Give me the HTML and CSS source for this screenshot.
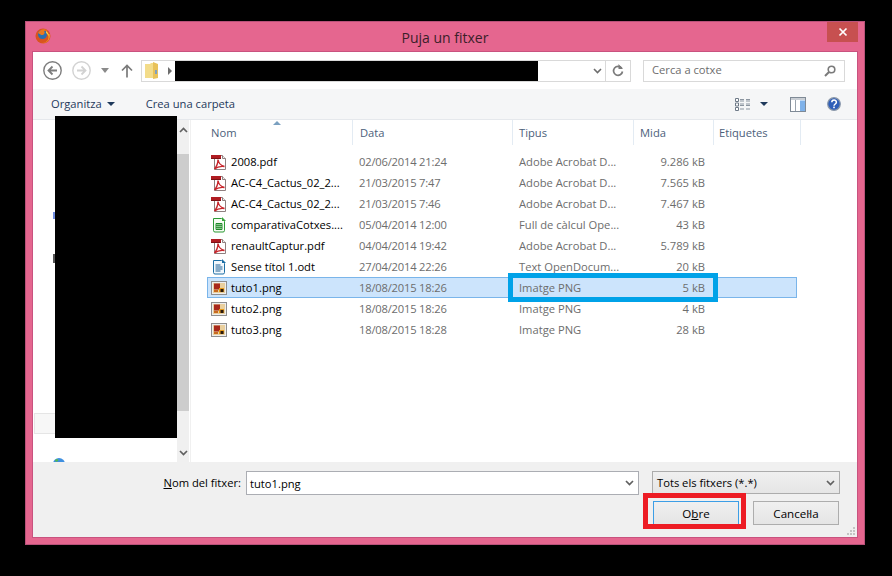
FILE: index.html
```html
<!DOCTYPE html>
<html lang="ca">
<head>
    <meta charset="UTF-8">
    <title>Puja un fitxer</title>
    <link rel="stylesheet" href="styles.css">
</head>
<body>
<svg class="sprites" width="0" height="0">
    <symbol id="i-pdf" viewBox="0 0 16 16">
        <path d="M3.500 1.500h8l3 3v11h-11z" fill="#fff" stroke="#8f7f7f"/>
        <path d="M11.500 1.500v3h3" fill="#eee" stroke="#8f7f7f"/>
        <rect x="0" y="1" width="10" height="4" fill="#b01c22"/>
        <rect x="0" y="4" width="10" height="1" fill="#7c1216"/>
        <path d="M7 5.500c.5 3.500 2.500 6 6.500 7-3.500-.5-7 0-10 2.500 2.500-3 3.500-6 3.500-9.500z" fill="none" stroke="#c8262c" stroke-width="1.400"/>
    </symbol>
    <symbol id="i-ods" viewBox="0 0 16 16">
        <path d="M2.500 1.500h8l3 3v9a1.500 1.500 0 0 1-1.500 1.500h-8a1.500 1.500 0 0 1-1.500-1.500z" fill="#f6fcf3" stroke="#2c9a35"/>
        <path d="M11 0l4 4h-4z" fill="#3aa63c"/>
        <path d="M5 6.500h6v6h-6z" fill="#d5efcf" stroke="#1f8a2b"/>
        <path d="M5 8.500h6M5 10.500h6M7 6.500v6M9 6.500v6" stroke="#1f8a2b" stroke-width=".8"/>
    </symbol>
    <symbol id="i-odt" viewBox="0 0 16 16">
        <path d="M2.500 1.500h8l3 3v9a1.500 1.500 0 0 1-1.500 1.500h-8a1.500 1.500 0 0 1-1.500-1.500z" fill="#f2f8fd" stroke="#1c6ea4"/>
        <path d="M11 0l4 4h-4z" fill="#1c6ea4"/>
        <path d="M4.500 6h5M4.500 8h7M4.500 10h7M4.500 12h5" stroke="#1c5f94" stroke-width="1.100"/>
    </symbol>
    <symbol id="i-png" viewBox="0 0 16 16">
        <rect x=".5" y="1.500" width="15" height="13" fill="#eee" stroke="#8e8e8e"/>
        <rect x="2" y="3" width="12" height="10" fill="#e9cf9e"/>
        <rect x="3" y="3.500" width="6" height="6" fill="#a8281c"/>
        <rect x="8" y="8" width="5" height="4" fill="#e89a18"/>
        <rect x="9.500" y="9" width="3" height="3" fill="#2a1a10"/>
        <rect x="3" y="10" width="4" height="2" fill="#c86a20"/>
    </symbol>
</svg>

<div class="window">
    <div class="titlebar">
        <svg class="fox" width="16" height="16" viewBox="0 0 16 16">
            <circle cx="8" cy="8" r="7.500" fill="#d9541e"/>
            <path d="M14.500 6a7 7 0 0 1-8 9c4 0 7-2 7-6 0-1-.2-2-.6-3z" fill="#f3a326"/>
            <circle cx="7.500" cy="6.500" r="4.500" fill="#2a6fb0"/>
            <path d="M3 5c2-4 7-5 10-2-2-1-3-.5-4 0 1 1 1 3-1 4-2 .5-3-1-5-2z" fill="#e8791e"/>
            <path d="M11 3c2 1 3 3 2.500 5.500-.5-2-1.500-3-2.500-3.500z" fill="#f8d048"/>
        </svg>
        <div class="title">Puja un fitxer</div>
        <div class="close">
            <svg width="10" height="10" viewBox="0 0 10 10"><path d="M1.500 1.500l7 7M8.500 1.500l-7 7" stroke="#fff" stroke-width="1.700"/></svg>
        </div>
    </div>

    <div class="dialog">
        <div class="navbar">
            <svg class="nav-back" width="19" height="19" viewBox="0 0 19 19">
                <circle cx="9.500" cy="9.500" r="8.700" fill="#fff" stroke="#7d7d7d" stroke-width="1.400"/>
                <path d="M14 9.500h-8M9.500 5.500l-4 4 4 4" fill="none" stroke="#7d7d7d" stroke-width="1.800"/>
            </svg>
            <svg class="nav-fwd" width="19" height="19" viewBox="0 0 19 19">
                <circle cx="9.500" cy="9.500" r="8.700" fill="#fff" stroke="#d2d2d2" stroke-width="1.400"/>
                <path d="M5 9.500h8M9.500 5.500l4 4-4 4" fill="none" stroke="#d2d2d2" stroke-width="1.800"/>
            </svg>
            <span class="nav-drop"></span>
            <svg class="nav-up" width="14" height="14" viewBox="0 0 14 14">
                <path d="M7 13.500v-12M2 6.500l5-5 5 5" fill="none" stroke="#7a7a7a" stroke-width="1.700"/>
            </svg>
            <div class="address">
                <svg class="folder" width="14" height="17" viewBox="0 0 14 17">
                    <path d="M0 2h5l1-1h2v15h-8z" fill="#f3dc8a"/>
                    <path d="M8 0l5 2v14l-5 1z" fill="#e8c25a"/>
                    <rect x="10" y="8" width="2" height="4" fill="#7f9fc0"/>
                </svg>
                <span class="crumb-arrow"></span>
                <span class="redact-path"></span>
                <svg class="addr-chevron" width="9" height="6" viewBox="0 0 9 6"><path d="M1 1l3.500 3.500 3.500-3.500" fill="none" stroke="#6d6d6d" stroke-width="1.600"/></svg>
                <span class="addr-sep"></span>
                <svg class="addr-refresh" width="12" height="13" viewBox="0 0 12 13">
                    <path d="M9.700 4.200a4.500 4.500 0 1 0 .8 3.300" fill="none" stroke="#7a7a7a" stroke-width="1.700"/>
                    <path d="M6.500 0v5h4.500z" fill="#7a7a7a"/>
                </svg>
            </div>
            <div class="search">
                <span class="search-text">Cerca a cotxe</span>
                <svg width="12" height="12" viewBox="0 0 12 12">
                    <circle cx="7.500" cy="4.500" r="3.300" fill="none" stroke="#7a7a7a" stroke-width="1.600"/>
                    <path d="M5 7l-4 4" stroke="#7a7a7a" stroke-width="2"/>
                </svg>
            </div>
        </div>

        <div class="cmdbar">
            <span class="cmd">Organitza<i class="caret"></i></span>
            <span class="cmd cmd-new">Crea una carpeta</span>
            <span class="cmd-spacer"></span>
            <svg class="view-icon" width="16" height="13" viewBox="0 0 16 13">
                <path d="M.5.500h3v3h-3zM.5 5h3v3h-3zM.5 9.500h3v3h-3z" fill="#fff" stroke="#6f7b88"/>
                <path d="M5 1.500h4M11 1.500h4M5 3h4M11 3h4M5 6h4M11 6h4M5 7.500h4M11 7.500h4M5 11h4M11 11h4" stroke="#8b95a0"/>
            </svg>
            <i class="caret view-caret"></i>
            <svg class="panel-icon" width="16" height="15" viewBox="0 0 16 15">
                <rect x=".5" y=".5" width="15" height="14" fill="#fff" stroke="#7f8a96"/>
                <rect x="1" y="1" width="14" height="2" fill="#c9ced4"/>
                <path d="M5.500 3v11" stroke="#9aa3ad"/>
                <rect x="10" y="3.500" width="5" height="10.500" fill="#7fb2ea"/>
            </svg>
            <svg class="help-icon" width="14" height="14" viewBox="0 0 14 14">
                <circle cx="7" cy="7" r="6.300" fill="#2f5fb8" stroke="#8a97a8" stroke-width="1.200"/>
                <path d="M4.800 5.300c0-3 4.600-3 4.600-.1 0 1.800-2.400 1.800-2.400 3.600" fill="none" stroke="#fff" stroke-width="1.500"/>
                <rect x="6.200" y="9.600" width="1.600" height="1.600" fill="#fff"/>
            </svg>
        </div>

        <div class="browser">
            <div class="sidepane">
                <div class="tree">
                    <div class="tree-blue"></div>
                    <div class="tree-dark"></div>
                    <div class="tree-current"></div>
                    <svg class="tree-globe" width="12" height="12" viewBox="0 0 12 12">
                        <circle cx="6" cy="6" r="6" fill="#3f8fe0"/>
                        <path d="M2 2c2-2 4-1 3 1-1 1-3 1-3-1z" fill="#52b852"/>
                    </svg>
                </div>
                <div class="scrollbar">
                    <svg class="scroll-up" width="9" height="6" viewBox="0 0 9 6"><path d="M1 5l3.500-3.500 3.500 3.500" fill="none" stroke="#606060" stroke-width="1.700"/></svg>
                    <div class="thumb"></div>
                    <svg class="scroll-down" width="9" height="6" viewBox="0 0 9 6"><path d="M1 1l3.500 3.500 3.500-3.500" fill="none" stroke="#606060" stroke-width="1.700"/></svg>
                </div>
                <div class="redact-tree"></div>
            </div>

            <div class="filelist">
                <div class="columns">
                    <div class="col col-name">Nom<span class="sort"></span></div>
                    <div class="col col-date">Data</div>
                    <div class="col col-type">Tipus</div>
                    <div class="col col-size">Mida</div>
                    <div class="col col-tags">Etiquetes</div>
                </div>
                <div class="rows">
                    <div class="row"><div class="name"><svg><use href="#i-pdf"/></svg>2008.pdf</div><div class="date">02/06/2014 21:24</div><div class="type">Adobe Acrobat D...</div><div class="size">9.286 kB</div></div>
                    <div class="row"><div class="name"><svg><use href="#i-pdf"/></svg>AC-C4_Cactus_02_2...</div><div class="date">21/03/2015 7:47</div><div class="type">Adobe Acrobat D...</div><div class="size">7.565 kB</div></div>
                    <div class="row"><div class="name"><svg><use href="#i-pdf"/></svg>AC-C4_Cactus_02_2...</div><div class="date">21/03/2015 7:46</div><div class="type">Adobe Acrobat D...</div><div class="size">7.467 kB</div></div>
                    <div class="row"><div class="name"><svg><use href="#i-ods"/></svg>comparativaCotxes....</div><div class="date">05/04/2014 12:00</div><div class="type">Full de càlcul Ope...</div><div class="size">43 kB</div></div>
                    <div class="row"><div class="name"><svg><use href="#i-pdf"/></svg>renaultCaptur.pdf</div><div class="date">04/04/2014 19:42</div><div class="type">Adobe Acrobat D...</div><div class="size">5.789 kB</div></div>
                    <div class="row"><div class="name"><svg><use href="#i-odt"/></svg>Sense títol 1.odt</div><div class="date">27/04/2014 22:26</div><div class="type">Text OpenDocum...</div><div class="size">20 kB</div></div>
                    <div class="row selected"><div class="name"><svg><use href="#i-png"/></svg>tuto1.png</div><div class="date">18/08/2015 18:26</div><div class="type">Imatge PNG</div><div class="size">5 kB</div></div>
                    <div class="row"><div class="name"><svg><use href="#i-png"/></svg>tuto2.png</div><div class="date">18/08/2015 18:26</div><div class="type">Imatge PNG</div><div class="size">4 kB</div></div>
                    <div class="row"><div class="name"><svg><use href="#i-png"/></svg>tuto3.png</div><div class="date">18/08/2015 18:28</div><div class="type">Imatge PNG</div><div class="size">28 kB</div></div>
                </div>
            </div>
        </div>

        <div class="footer">
            <div class="file-row">
                <label class="file-label"><u>N</u>om del fitxer:</label>
                <div class="file-input">
                    <span>tuto1.png</span>
                    <svg width="9" height="6" viewBox="0 0 9 6"><path d="M1 1l3.500 3.500 3.500-3.500" fill="none" stroke="#606060" stroke-width="1.700"/></svg>
                </div>
                <div class="file-filter">
                    <span>Tots els fitxers (*.*)</span>
                    <svg width="9" height="6" viewBox="0 0 9 6"><path d="M1 1l3.500 3.500 3.500-3.500" fill="none" stroke="#606060" stroke-width="1.700"/></svg>
                </div>
            </div>
            <div class="button-row">
                <button type="button" class="btn btn-default">O<u>b</u>re</button>
                <button type="button" class="btn">Cancel·la</button>
            </div>
            <svg class="grip" width="8" height="8" viewBox="0 0 8 8">
                <path d="M6 0h2v2h-2zM3 3h2v2h-2zM6 3h2v2h-2zM0 6h2v2h-2zM3 6h2v2h-2zM6 6h2v2h-2z" fill="#c4c4c4"/>
            </svg>
        </div>
    </div>

    <div class="mark mark-row"></div>
    <div class="mark mark-button"></div>
</div>
</body>
</html>
```

FILE: styles.css
```css
* {
    box-sizing: border-box;
}
body {
    margin: 0;
    padding: 21px 0 0 25px;
    height: 576px;
    overflow: hidden;
    background-color: #000;
    font-family: "Open Sans", "Liberation Sans", sans-serif;
    font-size: 11.2px;
    color: #000;
}
.sprites {
    position: absolute;
}
.window {
    position: relative;
    width: 840px;
    height: 524px;
    padding: 0 6px 6px;
    background-color: #e5668f;
    border: 1px solid #b9527a;
}

/* title bar */
.titlebar {
    display: grid;
    grid-template-columns: 1fr auto 1fr;
    height: 29px;
}
.fox {
    margin: 6px 0 0 3px;
}
.title {
    padding-top: 6px;
    font-size: 14px;
    line-height: 19px;
    color: #3a2029;
}
.close {
    justify-self: end;
    display: flex;
    align-items: center;
    justify-content: center;
    width: 31px;
    height: 20px;
    background-color: #c75050;
}

.dialog {
    display: flex;
    flex-direction: column;
    height: 487px;
    background-color: #fff;
    border: 1px solid #c9527f;
}

/* navigation */
.navbar {
    display: flex;
    align-items: center;
    height: 37px;
    padding-left: 10px;
}
.nav-fwd {
    margin-left: 10px;
}
.nav-drop {
    margin-left: 10px;
    border-top: 5px solid #8a8a8a;
    border-left: 4px solid transparent;
    border-right: 4px solid transparent;
}
.nav-up {
    margin-left: 11px;
}
.address {
    display: flex;
    align-items: center;
    width: 490px;
    height: 22px;
    margin-left: 7px;
    padding-left: 3px;
    border: 1px solid #d9d9d9;
}
.crumb-arrow {
    margin-left: 9px;
    border-left: 4px solid #6d6d6d;
    border-top: 4px solid transparent;
    border-bottom: 4px solid transparent;
}
.redact-path {
    width: 363px;
    height: 20px;
    margin-left: 3px;
    background-color: #000;
}
.addr-chevron {
    margin-left: 55px;
}
.addr-sep {
    width: 1px;
    height: 20px;
    margin-left: 3px;
    background-color: #d9d9d9;
}
.addr-refresh {
    margin-left: 6px;
}
.search {
    display: flex;
    align-items: center;
    justify-content: space-between;
    width: 202px;
    height: 22px;
    margin-left: 12px;
    padding: 0 8px;
    border: 1px solid #d9d9d9;
    color: #6d6d6d;
}
.search-text {
    margin-top: -2px;
}

/* command bar */
.cmdbar {
    display: flex;
    align-items: center;
    height: 31px;
    padding-left: 18px;
    background-color: #f5f6f7;
    border-bottom: 1px solid #e5e8ec;
    color: #1e395b;
}
.cmd {
    margin-top: -2px;
}
.cmd-new {
    margin-left: 31px;
}
.cmd-spacer {
    flex: 1;
}
.caret {
    display: inline-block;
    margin-left: 5px;
    vertical-align: 2px;
    border-top: 4px solid #1e395b;
    border-left: 4px solid transparent;
    border-right: 4px solid transparent;
}
.view-caret {
    margin-left: 9px;
    vertical-align: baseline;
}
.panel-icon {
    margin-left: 22px;
}
.help-icon {
    margin: 0 16px 0 21px;
}

/* browser area */
.browser {
    display: flex;
    height: 342px;
}
.sidepane {
    position: relative;
    display: flex;
    width: 158px;
    border-right: 1px solid #f0f0f0;
}
.tree {
    flex: none;
    width: 144px;
    padding-top: 92px;
    overflow: hidden;
}
.tree-blue {
    width: 3px;
    height: 7px;
    margin-left: 20px;
    background-color: #6f8ce0;
}
.tree-dark {
    width: 3px;
    height: 9px;
    margin: 35px 0 0 20px;
    background-color: #555;
}
.tree-current {
    width: 60px;
    height: 21px;
    margin: 150px 0 0 1px;
    background-color: #f7f7f7;
    border: 1px solid #e5e5e5;
}
.tree-globe {
    display: block;
    margin: 24px 0 0 20px;
}
.scrollbar {
    display: flex;
    flex-direction: column;
    align-items: center;
    width: 12px;
    height: 342px;
    background-color: #f0f0f0;
}
.scroll-up {
    margin-top: 7px;
    flex: none;
}
.thumb {
    width: 12px;
    height: 257px;
    margin-top: 21px;
    background-color: #cdcdcd;
}
.scroll-down {
    margin-top: 39px;
    flex: none;
}
.redact-tree {
    position: absolute;
    left: 22px;
    top: -4px;
    width: 122px;
    height: 322px;
    background-color: #000;
}

/* file list */
.filelist {
    flex: 1;
    padding-left: 16px;
}
.columns, .row {
    display: grid;
    grid-template-columns: 145px 160px 121px 80px 87px;
}
.columns {
    height: 25px;
    margin: 0 0 6px 1px;
    color: #4c607a;
}
.col {
    position: relative;
    height: 25px;
    padding: 5px 0 0 6px;
    border-right: 1px solid #e3ebf3;
}
.col-name {
    padding-left: 3px;
}
.col-date {
    padding-left: 7px;
}
.col-tags {
    padding-left: 5px;
}
.sort {
    position: absolute;
    left: 65px;
    top: 1px;
    border-bottom: 4px solid #7aa0c0;
    border-left: 4px solid transparent;
    border-right: 4px solid transparent;
}
.row {
    align-items: center;
    width: 590px;
    height: 21px;
    line-height: 19px;
    border: 1px solid transparent;
    color: #6d6d6d;
}
.row.selected {
    background-color: #cce4fc;
    border-color: #7ab5ea;
}
.name {
    display: flex;
    align-items: center;
    color: #000;
}
.name svg {
    flex: none;
    width: 16px;
    height: 16px;
    margin: 0 4px 0 3px;
}
.date {
    padding-left: 6px;
    letter-spacing: -0.2px;
}
.type {
    padding-left: 6px;
    white-space: nowrap;
}
.size {
    padding-right: 9px;
    text-align: right;
}

/* bottom area */
.footer {
    position: relative;
    display: flex;
    flex-direction: column;
    gap: 6px;
    height: 75px;
    padding: 9px 17px 0 0;
    background-color: #f0f0f0;
}
.file-row {
    display: flex;
    align-items: flex-start;
    justify-content: flex-end;
    height: 24px;
}
.file-label {
    margin-right: 5px;
    line-height: 24px;
}
.file-input, .file-filter {
    display: flex;
    align-items: center;
    justify-content: space-between;
    padding: 0 4px 0 3px;
}
.file-input {
    width: 393px;
    height: 24px;
    background-color: #fff;
    border: 1px solid #abadb3;
}
.file-filter {
    width: 188px;
    height: 23px;
    margin-left: 13px;
    padding-left: 4px;
    background: linear-gradient(#f0f0f0, #e5e5e5);
    border: 1px solid #acacac;
}
.button-row {
    display: flex;
    justify-content: flex-end;
    gap: 14px;
    padding-right: 1px;
}
.btn {
    width: 86px;
    height: 24px;
    padding: 0;
    font: inherit;
    font-size: 11.6px;
    color: #000;
    background: linear-gradient(#f0f0f0, #e5e5e5);
    border: 1px solid #adadad;
}
.btn-default {
    border-color: #3c9ee6;
}
.grip {
    position: absolute;
    right: 2px;
    bottom: 2px;
}

/* marks drawn over the screenshot */
.mark {
    position: absolute;
    border-style: solid;
    border-width: 5px;
}
.mark-row {
    left: 482px;
    top: 251px;
    width: 210px;
    height: 29px;
    border-color: #00a2e8;
}
.mark-button {
    left: 617px;
    top: 471px;
    width: 103px;
    height: 36px;
    border-color: #ed1c24;
}
```
